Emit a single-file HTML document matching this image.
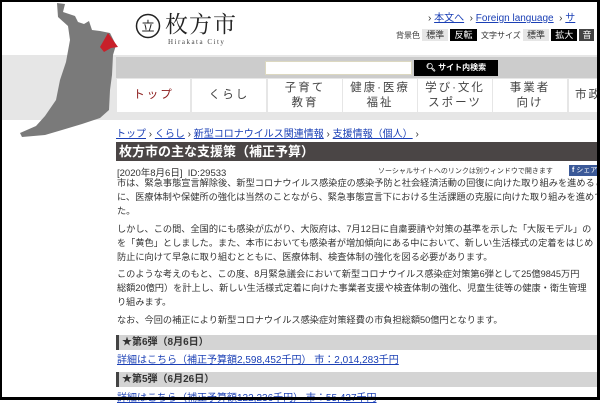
<!DOCTYPE html><html><head><meta charset="utf-8"><style>
*{margin:0;padding:0;box-sizing:border-box}
body{width:600px;height:400px;overflow:hidden;background:#fff;font-family:"Liberation Sans","Noto Sans CJK JP",sans-serif;position:relative;color:#333}
.a{position:absolute;white-space:nowrap}
a{color:#1a3fb5;text-decoration:underline}
.nav div{position:absolute;top:79px;height:33px;background:#fff;text-align:center;font-size:11.5px;line-height:15px;color:#444;display:flex;align-items:center;justify-content:center;letter-spacing:2px;overflow:hidden;white-space:nowrap}
p.t{position:absolute;left:117px;font-size:9.2px;line-height:14px;white-space:nowrap;color:#333;letter-spacing:0px;width:483px;overflow:hidden}
</style></head><body>
<div class="a" style="left:0;top:55px;width:600px;height:65px;background:#e6e6e6"></div>
<div class="a" style="left:116px;top:57px;width:484px;height:21px;background:#ccc"></div>
<div class="a" style="left:265px;top:61px;width:147px;height:14px;background:#fff;border:1px solid #dcd8c0"></div>
<div class="a" style="left:414px;top:60px;width:84px;height:16px;background:#000;color:#fff;font-size:8px;line-height:16px;text-align:center;font-weight:bold">&#x1F50D;&#xFE0E; サイト内検索</div>
<div class="nav">
<div style="left:117px;width:73px;color:#8b1a1a">トップ</div>
<div style="left:192px;width:74px">くらし</div>
<div style="left:268px;width:74px">子育て<br>教育</div>
<div style="left:343px;width:74px">健康·医療<br>福祉</div>
<div style="left:418px;width:74px">学び·文化<br>スポーツ</div>
<div style="left:493px;width:74px">事業者<br>向け</div>
<div style="left:569px;width:31px;justify-content:flex-start;padding-left:6px">市政</div>
</div>
<svg class="a" style="left:0;top:0" width="130" height="145"><polygon fill="#7a7a7a" points="57,3 65,4 63,12 75,16 78,22 84,24 89,21 92,30 100,31 110,33 116,45 113,55 112,75 110,90 109,110 100,118 82,124 62,130 45,135 22,137 20,133 36,126 45,116 56,100 60,80 66,62 70,40 68,26 58,17"/><polygon fill="#c8202a" points="108,33 113,40 118,47 111,48 104,52 100,47 104,40"/></svg>
<svg class="a" style="left:135px;top:13px" width="26" height="26"><circle cx="13" cy="13" r="11.5" fill="none" stroke="#222" stroke-width="1.5"/><text x="13" y="18" font-size="13" text-anchor="middle" fill="#222" font-family="Noto Sans CJK JP">立</text></svg>
<div class="a" style="left:165px;top:8px;font-size:23px;line-height:30px;color:#222;font-family:'Noto Serif CJK SC',serif;letter-spacing:1px">枚方市</div>
<div class="a" style="left:168px;top:38px;font-size:7px;letter-spacing:1.5px;color:#444;font-family:'Liberation Serif',serif">Hirakata City</div>
<div class="a" style="left:428px;top:9px;font-size:10px">› <a>本文へ</a> &nbsp;› <a>Foreign language</a> &nbsp;› <a>サ</a></div>
<div class="a" style="left:396px;top:28px;font-size:8px;line-height:14px">背景色 <span style="background:#e6e6e6;padding:1px 4px;font-size:9px">標準</span> <span style="background:#000;color:#fff;padding:1px 4px;font-size:9px">反転</span> &nbsp;文字サイズ <span style="background:#e6e6e6;padding:1px 4px;font-size:9px">標準</span> <span style="background:#000;color:#fff;padding:1px 4px;font-size:9px">拡大</span> <span style="background:#444;color:#fff;padding:1px 3px;font-size:9px">音</span></div>
<div class="a" style="left:116px;top:125px;font-size:10px"><a>トップ</a> › <a>くらし</a> › <a>新型コロナウイルス関連情報</a> › <a>支援情報（個人）</a> ›</div>
<div class="a" style="left:116px;top:142px;width:484px;height:19px;background:#4a4545;color:#fff;font-weight:bold;font-size:13px;line-height:19px;padding-left:3px">枚方市の主な支援策（補正予算）</div>
<div class="a" style="left:117px;top:165px;font-size:9.5px">[2020年8月6日] &nbsp;ID:29533</div>
<div class="a" style="left:378px;top:166px;font-size:7px">ソーシャルサイトへのリンクは別ウィンドウで開きます</div>
<div class="a" style="left:569px;top:165px;width:35px;height:11px;background:#3b5998;color:#fff;font-size:7px;line-height:11px;padding-left:3px"><b>f</b> シェア</div>
<p class="t" style="top:176px">市は、緊急事態宣言解除後、新型コロナウイルス感染症の感染予防と社会経済活動の回復に向けた取り組みを進めると<br>に、医療体制や保健所の強化は当然のことながら、緊急事態宣言下における生活課題の克服に向けた取り組みを進めて<br>た。</p>
<p class="t" style="top:222px">しかし、この間、全国的にも感染が広がり、大阪府は、7月12日に自粛要請や対策の基準を示した「大阪モデル」の<br>を「黄色」としました。また、本市においても感染者が増加傾向にある中において、新しい生活様式の定着をはじめ<br>防止に向けて早急に取り組むとともに、医療体制、検査体制の強化を図る必要があります。</p>
<p class="t" style="top:267px">このような考えのもと、この度、8月緊急議会において新型コロナウイルス感染症対策第6弾として25億9845万円<br>総額20億円）を計上し、新しい生活様式定着に向けた事業者支援や検査体制の強化、児童生徒等の健康・衛生管理<br>り組みます。</p>
<p class="t" style="top:313px">なお、今回の補正により新型コロナウイルス感染症対策経費の市負担総額50億円となります。</p>
<div class="a" style="left:116px;top:335px;width:484px;height:15px;background:#d4d4d4;border-left:3px solid #444;font-size:10px;font-weight:bold;line-height:15px;padding-left:3px">★第6弾（8月6日）</div>
<div class="a" style="left:117px;top:351px;font-size:10px"><a>詳細はこちら（補正予算額2,598,452千円） 市：2,014,283千円</a></div>
<div class="a" style="left:116px;top:372px;width:484px;height:15px;background:#d4d4d4;border-left:3px solid #444;font-size:10px;font-weight:bold;line-height:15px;padding-left:3px">★第5弾（6月26日）</div>
<div class="a" style="left:117px;top:389px;font-size:10px"><a>詳細はこちら（補正予算額122,236千円） 市：55,427千円</a></div>
<div class="a" style="left:0;top:0;width:600px;height:400px;border:2px solid #000;border-right-width:3px;border-bottom-width:3px"></div>
</body></html>
